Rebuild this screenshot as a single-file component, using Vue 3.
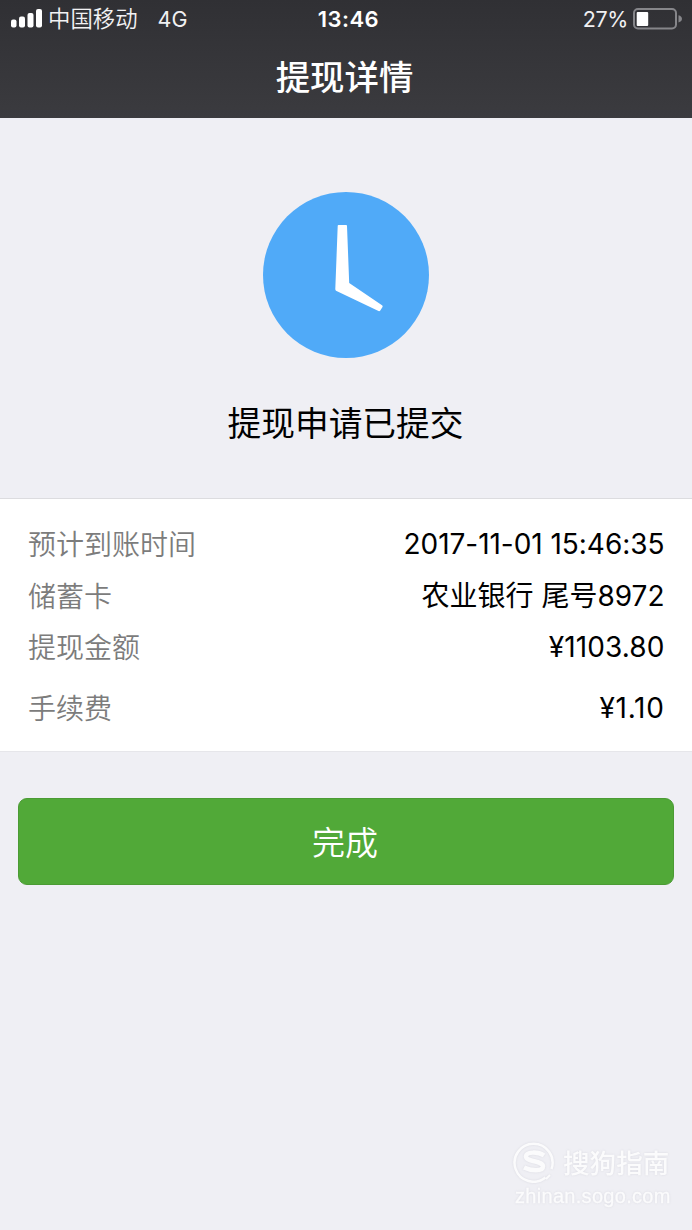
<script setup>
const details = [
  { label: '预计到账时间', value: '2017-11-01 15:46:35', kind: 'date' },
  { label: '储蓄卡', value: '农业银行 尾号8972', kind: 'bank' },
  { label: '提现金额', value: '¥1103.80', kind: 'amount' },
  { label: '手续费', value: '¥1.10', kind: 'fee' },
]
</script>

<template>
  <div class="screen">
    <header class="header">
      <div class="status">
        <div class="side">
          <svg class="signal" width="32" height="20" viewBox="0 0 32 20">
            <rect x="0" y="10.500" width="5.500" height="8" rx="2" />
            <rect x="8" y="7.500" width="6" height="11" rx="2" />
            <rect x="16.500" y="4" width="6" height="14.500" rx="2" />
            <rect x="25" y="0" width="6" height="18.500" rx="2" />
          </svg>
          <span class="carrier">中国移动</span>
          <span class="network">4G</span>
        </div>
        <span class="time">13:46</span>
        <div class="side right">
          <span class="percent">27%</span>
          <svg class="battery" width="49" height="22" viewBox="0 0 49 22">
            <rect x="1" y="1" width="42" height="19.500" rx="4" fill="none" stroke="#86868a" stroke-width="2" />
            <rect x="3.700" y="4" width="11.500" height="14" rx="1" fill="#fff" />
            <path d="M45.500 7.200 Q49 8.200 49 10.800 Q49 13.400 45.500 14.400Z" fill="#86868a" />
          </svg>
        </div>
      </div>
      <h1 class="title">提现详情</h1>
    </header>

    <section class="result">
      <svg class="clock" width="166" height="166" viewBox="0 0 166 166">
        <circle cx="83" cy="83" r="83" fill="#50aaf8" />
        <path d="M75.500 33H83.200Q84 33 84 34L86.200 91L119 113.200Q120 114 119.500 115L117.300 118.400Q116.500 119.500 115.500 119L73 98.800Q72.300 98.300 72.300 97L74.700 34Q74.700 33 75.500 33Z" fill="#fff" />
      </svg>
      <p class="message">提现申请已提交</p>
    </section>

    <section class="details">
      <div v-for="d in details" :key="d.label" class="row" :class="d.kind">
        <span class="label">{{ d.label }}</span>
        <span class="value">{{ d.value }}</span>
      </div>
    </section>

    <button class="done">完成</button>

    <div class="watermark">
      <div class="brand">
        <svg width="42" height="42" viewBox="0 0 42 42" fill="none" stroke="#fff">
          <path d="M32.500 36.500A19 19 0 1 1 38.500 28" stroke-width="2.500" />
          <path d="M31 14.500C25 10.500 13 10.500 13 15.500C13 21 30 19.500 30 25.500C30 30.500 18 30 11 26.500" stroke-width="4.500" />
          <path d="M33 38L37 34" stroke-width="2" />
        </svg>
        <span class="brand-name">搜狗指南</span>
      </div>
      <span class="site">zhinan.sogo.com</span>
    </div>
  </div>
</template>

<style>
body {
  margin: 0;
  background: #efeff4;
}
</style>

<style scoped>
.screen {
  position: relative;
  box-sizing: border-box;
  width: 692px;
  height: 1230px;
  overflow: hidden;
  background: #efeff4;
  color: #000;
  font-family: Inter, "Noto Sans CJK SC", sans-serif;
  white-space: nowrap;
}
.header {
  height: 118px;
  background: linear-gradient(#303034, #3b3b3f);
  color: #fff;
}
.status {
  display: grid;
  grid-template-columns: 1fr auto 1fr;
  align-items: center;
  height: 38px;
  padding: 0 10px 0 11px;
  font-size: 22px;
  line-height: 38px;
}
.side {
  display: flex;
  align-items: center;
  height: 38px;
}
.right {
  justify-content: flex-end;
}
.signal {
  fill: #fff;
}
.carrier {
  margin-left: 5px;
  font-size: 22.400px;
  font-weight: 350;
  color: #f2f2f4;
}
.network {
  margin-left: 20px;
  font-size: 21.500px;
  color: #f0f0f2;
}
.time {
  padding-left: 4px;
  font-weight: 600;
  letter-spacing: 0.450px;
}
.percent {
  margin-right: 5px;
  font-size: 21.500px;
  letter-spacing: -0.400px;
  color: #f0f0f2;
}
.title {
  margin: 0;
  padding: 14px 3px 0 0;
  font-size: 34.400px;
  font-weight: 500;
  line-height: 52px;
  text-align: center;
}
.result {
  display: flex;
  flex-direction: column;
  align-items: center;
  box-sizing: border-box;
  height: 380px;
  padding-top: 74px;
}
.message {
  margin: 41px 0 0;
  padding-right: 1px;
  font-size: 33.700px;
  line-height: 50px;
}
.details {
  box-sizing: border-box;
  height: 254px;
  padding: 19px 27.500px 0 28px;
  border-top: 1px solid #dcdcdf;
  border-bottom: 1px solid #e6e6ea;
  background: #fff;
}
.row {
  display: flex;
  justify-content: space-between;
  height: 52px;
  font-size: 28px;
  line-height: 52px;
}
.fee {
  margin-top: 8px;
}
.date .value {
  letter-spacing: -0.040px;
}
.amount .value {
  line-height: 51px;
  letter-spacing: 0.100px;
}
.fee .value {
  letter-spacing: 0.700px;
}
.label {
  padding-top: 1px;
  font-weight: 350;
  color: #7c7c7c;
}
.amount .label {
  padding-top: 0;
}
.done {
  display: block;
  box-sizing: border-box;
  width: 656px;
  height: 87px;
  margin: 46px 0 0 18px;
  padding: 3px 2px 0 0;
  border: 1px solid #4b9b34;
  border-radius: 9px;
  background: #51a938;
  color: #fff;
  font-family: inherit;
  font-size: 33px;
  font-weight: 350;
  line-height: 82px;
}
.watermark {
  position: absolute;
  top: 1141px;
  left: 513px;
  color: #fff;
  opacity: 0.75;
  filter: drop-shadow(0 0 1px #d2d2da);
}
.brand {
  display: flex;
  align-items: center;
  height: 42px;
}
.brand-name {
  margin-left: 8px;
  padding-top: 1px;
  font-size: 26.600px;
  font-weight: 500;
  line-height: 42px;
}
.site {
  display: block;
  margin-left: 2px;
  font-family: "Liberation Sans", Arial, sans-serif;
  font-size: 20px;
  line-height: 26px;
  letter-spacing: 0.300px;
  -webkit-text-stroke: 0.300px #fff;
}
</style>
